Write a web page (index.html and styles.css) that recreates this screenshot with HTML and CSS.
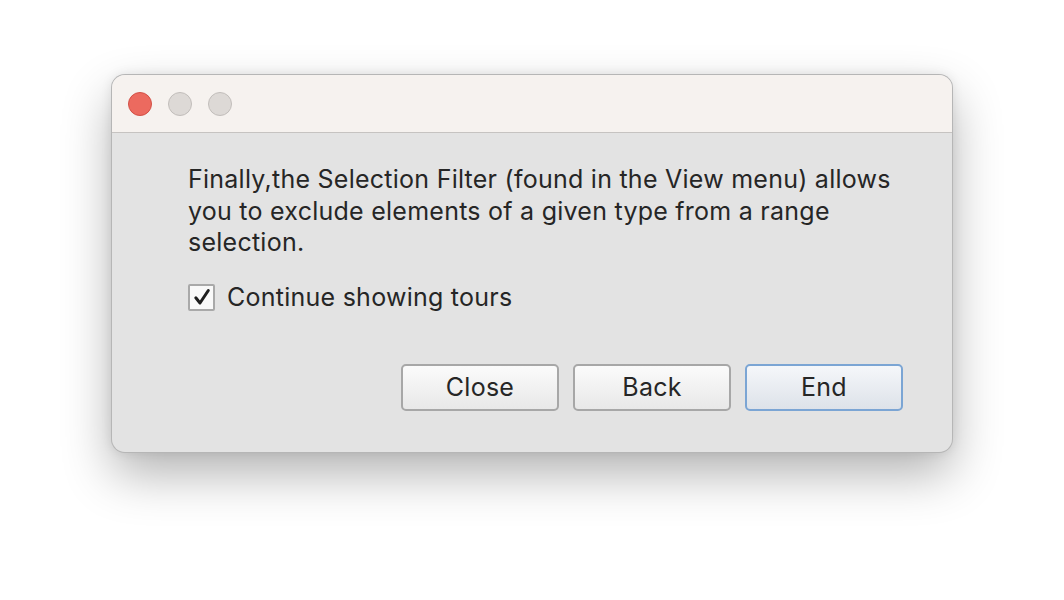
FILE: index.html
```html
<!DOCTYPE html>
<html>
<head>
<meta charset="utf-8">
<link rel="stylesheet" href="styles.css">
</head>
<body>
<div class="window">
  <div class="titlebar">
    <span class="light red"></span>
    <span class="light"></span>
    <span class="light"></span>
  </div>
  <div class="content">
    <p class="message">Finally,the Selection Filter (found in the View menu) allows you to exclude elements of a given type from a range selection.</p>
    <label class="check">
      <span class="box"><svg width="18" height="18" viewBox="0 0 18 18"><path d="M2.8 9.8 L7 15 L15.3 2.5" fill="none" stroke="#1e1e1e" stroke-width="3" stroke-linecap="round" stroke-linejoin="round"/></svg></span>
      <span class="check-label">Continue showing tours</span>
    </label>
    <div class="buttons">
      <button class="btn">Close</button>
      <button class="btn">Back</button>
      <button class="btn default">End</button>
    </div>
  </div>
</div>
</body>
</html>
```

FILE: styles.css
```css
html, body {
  margin: 0;
  padding: 0;
  background: #ffffff;
}
body {
  width: 1064px;
  height: 600px;
  overflow: hidden;
  padding: 75px 0 0 112px;
  box-sizing: border-box;
  font-family: Inter, "Liberation Sans", sans-serif;
  color: #262626;
}
.window {
  width: 840px;
  height: 377px;
  box-sizing: border-box;
  border-radius: 13px;
  background: #e3e3e3;
  box-shadow: 0 0 0 1px #b6b6b6, 0 22px 50px rgba(0,0,0,0.30), 0 0 12px rgba(0,0,0,0.10);
  overflow: hidden;
  display: flex;
  flex-direction: column;
}
.titlebar {
  height: 56px;
  background: #f6f2ef;
  border-bottom: 1px solid #c6c3c1;
  display: flex;
  align-items: center;
  gap: 16px;
  padding-left: 16px;
  padding-top: 1px;
}
.light {
  width: 22px;
  height: 22px;
  border-radius: 50%;
  background: #ddd9d6;
  border: 1px solid #c2bebb;
}
.light.red {
  background: #ec6a5f;
  border-color: #d35046;
}
.content {
  flex: 1;
  padding: 31px 49px 0 76px;
  display: flex;
  flex-direction: column;
}
.message {
  margin: 0;
  font-size: 25px;
  letter-spacing: 0.25px;
  line-height: 31.5px;
  width: 712px;
}
.check {
  display: flex;
  align-items: center;
  gap: 12px;
  margin-top: 25px;
  font-size: 25px;
  letter-spacing: 0.25px;
  height: 27px;
}
.box {
  width: 23px;
  height: 23px;
  border: 2px solid #a9a9a9;
  border-radius: 2px;
  background: #f9f9f9;
  display: flex;
  align-items: center;
  justify-content: center;
}
.buttons {
  display: flex;
  justify-content: flex-end;
  gap: 14px;
  margin-top: 53px;
}
.btn {
  width: 158px;
  height: 47px;
  border: 2px solid #a7a7a7;
  border-radius: 5px;
  background: linear-gradient(#fbfbfb, #e8e8e8);
  font-family: Inter, "Liberation Sans", sans-serif;
  font-size: 25px;
  letter-spacing: 0.25px;
  color: #262626;
  padding: 0;
}
.btn.default {
  border-color: #7ba5d4;
  background: linear-gradient(#f5f7fa, #dde2e9);
}
```
